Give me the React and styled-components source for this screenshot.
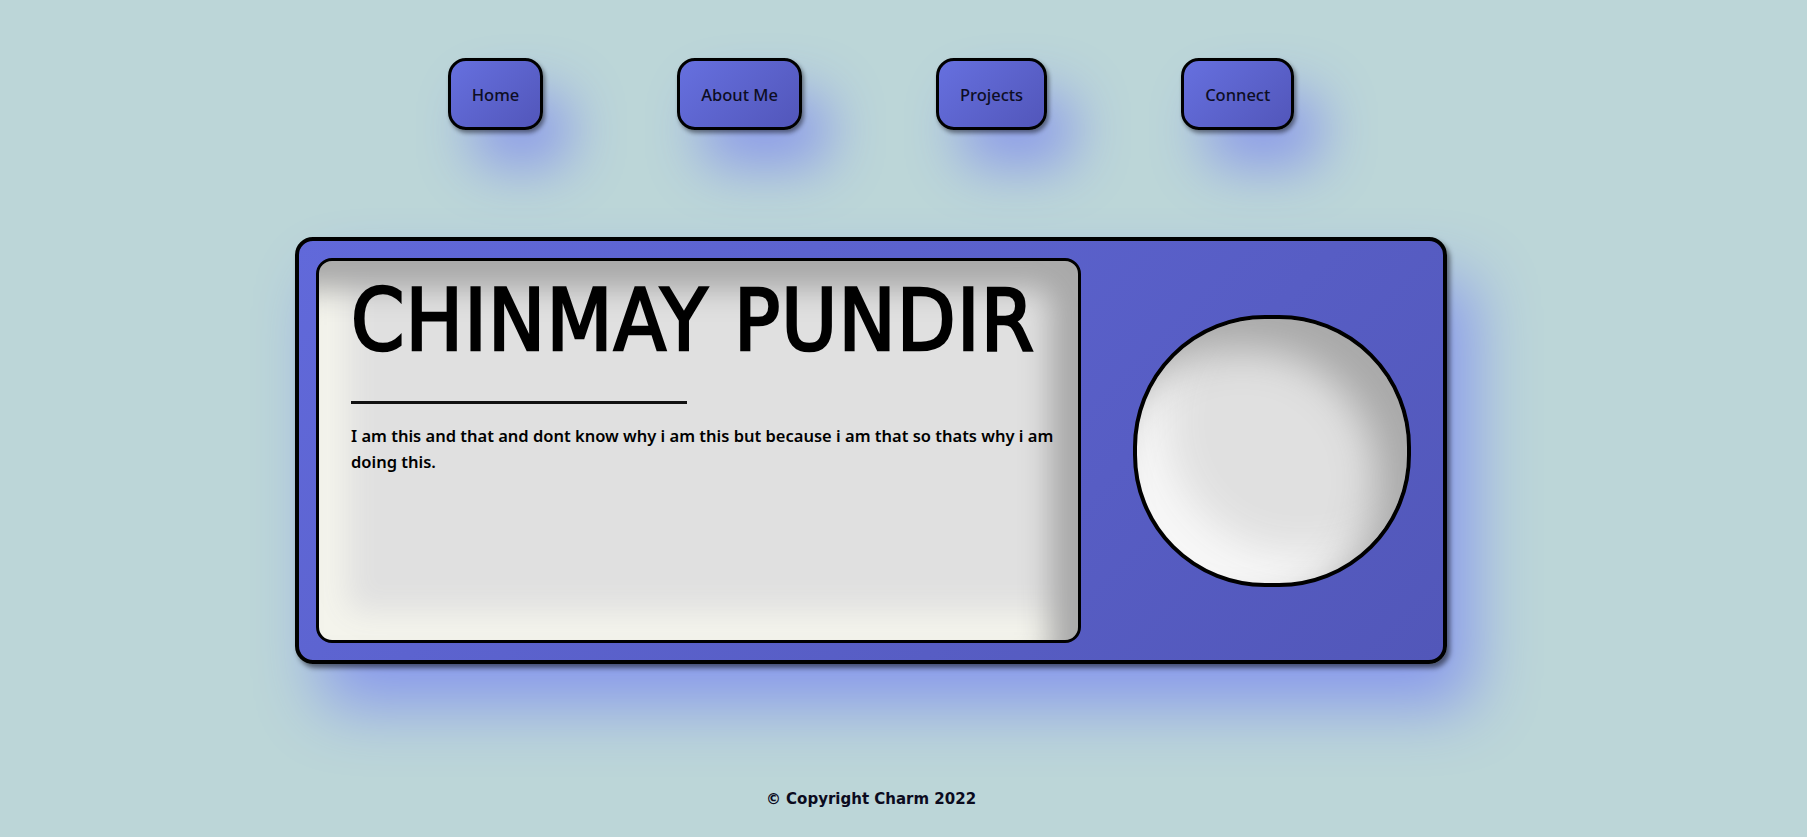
import React from 'react';
import styled, { createGlobalStyle } from 'styled-components';

const GlobalStyle = createGlobalStyle`
  html, body {
    margin: 0;
    padding: 0;
    background: #bcd6d8;
  }
  body {
    min-height: 837px;
    font-family: 'Roboto', 'Noto Sans', sans-serif;
  }
`;

const Page = styled.div`
  display: flex;
  flex-direction: column;
  align-items: center;
  padding-right: 65px;
  min-height: 837px;
  box-sizing: border-box;
`;

const Nav = styled.nav`
  display: flex;
  gap: 134px;
  margin-top: 58px;
`;

const NavButton = styled.a`
  display: flex;
  align-items: center;
  justify-content: center;
  height: 72px;
  padding: 0 21px;
  box-sizing: border-box;
  border: 3px solid #000;
  border-radius: 18px;
  background: linear-gradient(135deg, #6670df 0%, #5256ba 100%);
  box-shadow: 2px 3px 4px rgba(0, 0, 0, 0.45), 26px 36px 55px #8b9ae9;
  color: #0d0d24;
  font-family: 'Noto Sans', 'Roboto', sans-serif;
  font-size: 16.5px;
  font-weight: 500;
  text-decoration: none;
  cursor: pointer;
`;

const Card = styled.section`
  display: flex;
  align-items: center;
  margin-top: 107px;
  width: 1152px;
  height: 427px;
  box-sizing: border-box;
  padding: 17px;
  border: 4px solid #000;
  border-radius: 18px;
  background: linear-gradient(135deg, #6169da 0%, #5257b9 100%);
  box-shadow: 3px 4px 5px rgba(0, 0, 0, 0.5), 26px 42px 65px #8899ec;
`;

const InfoPanel = styled.div`
  display: flex;
  flex-direction: column;
  width: 765px;
  height: 385px;
  box-sizing: border-box;
  padding: 0 20px 0 32px;
  border: 3px solid #000;
  border-radius: 16px;
  background: #e0e0e0;
  box-shadow: inset -28px 28px 30px #a9a9a9, inset 28px -28px 30px #f4f4ec;
`;

const Name = styled.h1`
  margin: 10px 0 0;
  font-family: 'DejaVu Sans Condensed', 'DejaVu Sans', sans-serif;
  font-stretch: condensed;
  font-size: 85px;
  font-weight: 400;
  -webkit-text-stroke: 2.6px #000;
  letter-spacing: 1.2px;
  line-height: 100px;
  color: #000;
  white-space: nowrap;
`;

const Rule = styled.div`
  width: 336px;
  height: 3px;
  margin-top: 30px;
  background: #111;
`;

const Bio = styled.p`
  margin: 19px 0 0;
  font-family: 'Noto Sans', 'Roboto', sans-serif;
  font-size: 16.5px;
  font-weight: 600;
  line-height: 26px;
  color: #000;
`;

const Avatar = styled.div`
  width: 278px;
  height: 272px;
  margin-left: 52px;
  flex-shrink: 0;
  box-sizing: border-box;
  border: 4px solid #000;
  border-radius: 132px;
  background: #e0e0e0;
  box-shadow: inset -30px 30px 40px #a9a9a9, inset 30px -30px 40px #f7f7f7;
`;

const Footer = styled.footer`
  margin-top: 126px;
  font-family: 'DejaVu Sans', 'Verdana', sans-serif;
  font-size: 15px;
  font-weight: 700;
  color: #0b0b1e;
`;

const links = ['Home', 'About Me', 'Projects', 'Connect'];

export default function App() {
    return (
        <>
            <GlobalStyle />
            <Page>
                <Nav>
                    {links.map((label) => (
                        <NavButton key={label}>{label}</NavButton>
                    ))}
                </Nav>
                <Card>
                    <InfoPanel>
                        <Name>CHINMAY PUNDIR</Name>
                        <Rule />
                        <Bio>
                            I am this and that and dont know why i am this but because i am that so thats why i am doing this.
                        </Bio>
                    </InfoPanel>
                    <Avatar />
                </Card>
                <Footer>© Copyright Charm 2022</Footer>
            </Page>
        </>
    );
}
